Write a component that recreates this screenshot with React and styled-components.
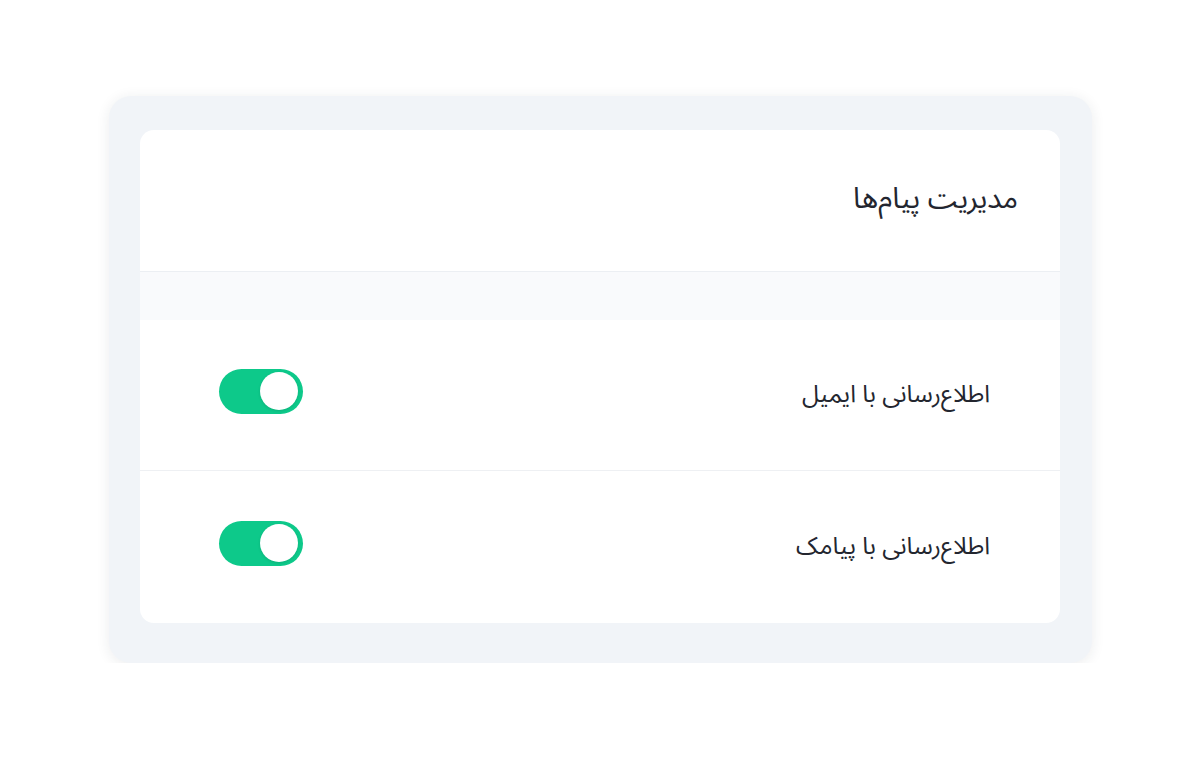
import React, { useState } from "react";
import styled, { createGlobalStyle } from "styled-components";

const GlobalStyle = createGlobalStyle`
  html, body {
    margin: 0;
    padding: 0;
    background: #ffffff;
  }
  body {
    font-family: "Noto Sans Arabic", "DejaVu Sans", "Noto Sans", sans-serif;
  }
`;

const Page = styled.div`
  padding: 96px 0 0 109px;
`;

const Frame = styled.div`
  width: 983px;
  height: 567px;
  box-sizing: border-box;
  padding: 34px 32px 40px 31px;
  background: #f1f4f8;
  border-radius: 22px;
  box-shadow: 0 2px 14px rgba(30, 40, 60, 0.09);
`;

const Card = styled.div`
  direction: rtl;
  background: #ffffff;
  border-radius: 14px;
  overflow: hidden;
  display: flex;
  flex-direction: column;
`;

const Header = styled.div`
  height: 142px;
  box-sizing: border-box;
  display: flex;
  align-items: center;
  padding: 0 42px 4px;
  border-bottom: 1px solid #eceff3;
`;

const Title = styled.h2`
  margin: 0;
  font-size: 29px;
  font-weight: 400;
  color: #23262f;
`;

const Band = styled.div`
  height: 48px;
  background: #f9fafc;
`;

const Row = styled.div`
  height: ${(p) => (p.$last ? 152 : 151)}px;
  box-sizing: border-box;
  display: flex;
  align-items: center;
  justify-content: space-between;
  padding: 0 70px 2px 79px;
  border-bottom: ${(p) => (p.$last ? "none" : "1px solid #eef0f3")};
`;

const Label = styled.span`
  font-size: 24.3px;
  color: #23262f;
`;

const Switch = styled.button`
  width: 84px;
  height: 45px;
  margin-top: -6px;
  border: none;
  border-radius: 23px;
  padding: 0;
  background: ${(p) => (p.$on ? "#0dc98a" : "#d5d9e0")};
  position: relative;
  cursor: pointer;
  direction: ltr;

  &::after {
    content: "";
    position: absolute;
    top: 3.5px;
    left: ${(p) => (p.$on ? "41px" : "4px")};
    width: 38px;
    height: 38px;
    border-radius: 50%;
    background: #ffffff;
    box-shadow: 0 1px 3px rgba(0, 0, 0, 0.12);
  }
`;

const items = [
  { id: "email", label: "اطلاع‌رسانی با ایمیل" },
  { id: "sms", label: "اطلاع‌رسانی با پیامک" },
];

export default function App() {
  const [state, setState] = useState({ email: true, sms: true });
  return (
    <>
      <GlobalStyle />
      <Page>
        <Frame>
          <Card>
            <Header>
              <Title>مدیریت پیام‌ها</Title>
            </Header>
            <Band />
            {items.map((it, i) => (
              <Row key={it.id} $last={i === items.length - 1}>
                <Label>{it.label}</Label>
                <Switch
                  $on={state[it.id]}
                  onClick={() => setState((s) => ({ ...s, [it.id]: !s[it.id] }))}
                  aria-label={it.label}
                />
              </Row>
            ))}
          </Card>
        </Frame>
      </Page>
    </>
  );
}
